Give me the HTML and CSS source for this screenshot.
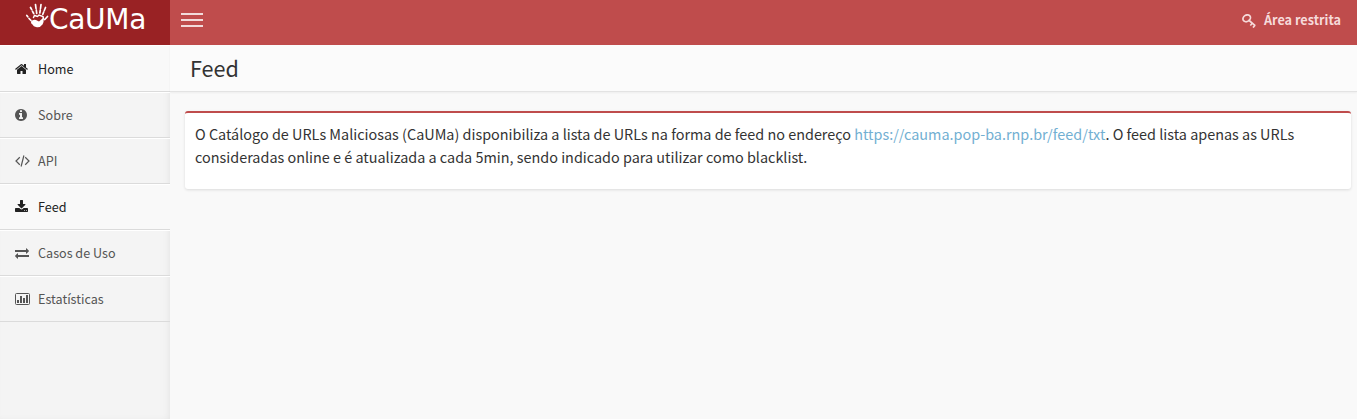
FILE: index.html
```html
<!DOCTYPE html>
<html lang="pt-BR">
<head>
<meta charset="utf-8">
<title>CaUMa - Feed</title>
<link rel="stylesheet" href="styles.css">
</head>
<body>
<header class="header">
  <a class="logo">
    <svg class="hand" viewBox="0 0 24 28" fill="#fff" stroke="#fff" stroke-linecap="round">
      <path d="M6 20.500Q8 18 11 19L14 20.500L18 17Q19.500 20 17.500 23.500Q15 27 11 26Q8.500 25.500 7.500 23.500Q5.500 22.500 6 20.500Z" stroke="none"/>
      <path d="M8.500 16.500L9.500 14.500L12.500 15.500L14 14L18 15.500L18.500 18" fill="none" stroke-width="1.500"/>
      <path d="M1.800 14.500L2.800 15.800M4 17.500L6 19.500M5.500 6.500L6.700 8.700M7.500 10.300L8.700 12.500M10.500 3.500L11 7.500M11.300 9L11.700 12.300M16 3.500L15.500 7.500M15.300 9L14.800 12M20.500 6.500L19.300 9.500M18.700 11L17.800 13.300M22.500 15.500L19.800 18.500" fill="none" stroke-width="1.700"/>
    </svg>
    <span class="logo-text">CaUMa</span>
  </a>
  <nav class="navbar">
    <span class="toggle"><i></i><i></i><i></i></span>
    <a class="login">
      <svg class="key" viewBox="0 0 14 14" fill="none" stroke="#f6dada" stroke-width="1.700"><ellipse cx="4.700" cy="4.300" rx="4" ry="3.200" transform="rotate(-35 4.700 4.300)"/><path d="M6.500 6L13.200 11.600M8.300 11.500L10.300 9.300M11 13.600L13 11.200"/></svg>
      <span>Área restrita</span>
    </a>
  </nav>
</header>
<div class="wrapper">
  <aside class="sidebar">
    <a class="item active"><svg viewBox="64 0 1792 1792"><path d="M1472 992v480q0 26-19 45t-45 19h-384v-384h-256v384h-384q-26 0-45-19t-19-45v-480q0-1 .5-3t.5-3l575-474 575 474q1 2 1 6zm223-69l-62 74q-8 9-21 11h-3q-13 0-21-7l-692-577-692 577q-12 8-24 7-13-2-21-11l-62-74q-8-10-7-23.500t11-21.500l719-599q32-26 76-26t76 26l244 204v-195q0-14 9-23t23-9h192q14 0 23 9t9 23v408l219 182q10 8 11 21.500t-7 23.500z"/></svg><span>Home</span></a>
    <a class="item"><svg viewBox="128 0 1792 1792"><path d="M1152 1376v-160q0-14-9-23t-23-9h-96v-512q0-14-9-23t-23-9h-320q-14 0-23 9t-9 23v160q0 14 9 23t23 9h96v320h-96q-14 0-23 9t-9 23v160q0 14 9 23t23 9h448q14 0 23-9t9-23zm-128-896v-160q0-14-9-23t-23-9h-192q-14 0-23 9t-9 23v160q0 14 9 23t23 9h192q14 0 23-9t9-23zm640 416q0 209-103 385.500t-279.500 279.500-385.500 103-385.500-103-279.500-279.500-103-385.500 103-385.500 279.500-279.500 385.500-103 385.500 103 279.500 279.500 103 385.500z"/></svg><span>Sobre</span></a>
    <a class="item"><svg class="wide" viewBox="0 0 15 14"><path d="M4.800 3.300L1 7L4.800 10.700M10.200 3.300L14 7L10.200 10.700M8.900 1.500L6.100 12.500" fill="none" stroke="currentColor" stroke-width="1.200"/></svg><span>API</span></a>
    <a class="item active"><svg viewBox="64 0 1792 1792"><path d="M1344 1344q0-26-19-45t-45-19-45 19-19 45 19 45 45 19 45-19 19-45zm256 0q0-26-19-45t-45-19-45 19-19 45 19 45 45 19 45-19 19-45zm128-224v320q0 40-28 68t-68 28h-1472q-40 0-68-28t-28-68v-320q0-40 28-68t68-28h465l135 136q58 56 136 56t136-56l136-136h464q40 0 68 28t28 68zm-325-569q17 41-14 70l-448 448q-18 19-45 19t-45-19l-448-448q-31-29-14-70 17-39 59-39h256v-448q0-26 19-45t45-19h256q26 0 45 19t19 45v448h256q42 0 59 39z"/></svg><span>Feed</span></a>
    <a class="item"><svg viewBox="0 0 1792 1792"><path d="M1792 1184v192q0 13-9.500 22.500t-22.500 9.500h-1376v192q0 13-9.500 22.500t-22.500 9.500q-12 0-24-10l-319-320q-9-9-9-22 0-14 9-23l320-320q9-9 23-9 13 0 22.500 9.500t9.500 22.500v192h1376q13 0 22.500 9.500t9.500 22.500zm0-544q0 14-9 23l-320 320q-9 9-23 9-13 0-22.500-9.500t-9.500-22.500v-192h-1376q-13 0-22.500-9.500t-9.500-22.500v-192q0-13 9.500-22.500t22.500-9.500h1376v-192q0-14 9-23t23-9q12 0 24 10l319 319q9 9 9 23z"/></svg><span>Casos de Uso</span></a>
    <a class="item"><svg class="wide" viewBox="0 0 15 14"><rect x=".5" y="1.500" width="14" height="11" rx="1" fill="none" stroke="currentColor"/><path d="M2 8h2v3H2zM5 4h2v7H5zM8 6h2v5H8zM11 3h2v8h-2z"/></svg><span>Estatísticas</span></a>
  </aside>
  <main class="content">
    <h1 class="title">Feed</h1>
    <section class="box">
      <p>O Catálogo de URLs Maliciosas (CaUMa) disponibiliza a lista de URLs na forma de feed no endereço <a class="link">https://cauma.pop-ba.rnp.br/feed/txt</a>. O feed lista apenas as URLs<br>consideradas online e é atualizada a cada 5min, sendo indicado para utilizar como blacklist.</p>
    </section>
  </main>
</div>
</body>
</html>
```
FILE: styles.css
```css
* { box-sizing: border-box; }
body { margin: 0; height: 419px; overflow: hidden; display: flex; flex-direction: column; background: #f9f9f9; color: #333; font-family: "Noto Sans CJK SC", "Open Sans", sans-serif; }
.header { display: flex; height: 45px; flex: none; }
.logo { width: 170px; background: #992224; display: flex; padding-left: 25px; color: #fff; }
.hand { width: 24px; height: 28px; margin-top: 1px; }
.logo-text { font: 28px/40px "DejaVu Sans", sans-serif; letter-spacing: -.3px; }
.navbar { flex: 1; background: #bf4c4c; display: flex; justify-content: space-between; padding: 0 16px 0 11px; }
.toggle { display: flex; flex-direction: column; gap: 4px; padding-top: 13px; }
.toggle i { width: 22px; height: 2px; background: #f2dbdb; }
.login { display: flex; gap: 8px; height: 39px; align-items: center; color: #f6dada; font-size: 12.7px; font-weight: 700; white-space: nowrap; }
.key { width: 14px; height: 14px; margin-top: 2px; }
.wrapper { display: flex; flex: 1; }
.sidebar { width: 170px; flex: none; background: #f4f4f4; box-shadow: inset -3px 0 8px -4px rgba(0,0,0,.1); }
.item { display: flex; align-items: center; height: 46px; padding-left: 15px; border-top: 1px solid #fff; border-bottom: 1px solid #dbdbdb; color: #555; font-size: 12.6px; line-height: 20px; }
.item:first-child { height: 47px; padding-top: 1px; }
.item.active { background: #f9f9f9; color: #222; }
.item svg { width: 14px; height: 14px; fill: currentColor; margin-right: 9px; }
.item svg.wide { width: 15px; margin-right: 8px; }
.content { flex: 1; min-width: 0; }
.title { margin: 0; height: 47px; padding: 0 20px; background: #fbfbfb; border-bottom: 1px solid #e3e3e3; box-shadow: 0 1px 2px rgba(0,0,0,.05); font-size: 21.6px; line-height: 45px; font-weight: 400; }
.box { margin: 19px 6px 0 15px; height: 78px; padding: 9px 10px; background: #fff; border-top: 2px solid #bf4c4c; border-radius: 3px; box-shadow: 0 1px 3px rgba(0,0,0,.12); }
.box p { margin: 0; font-size: 14.41px; line-height: 23px; white-space: nowrap; }
.link { color: #72afd2; }
```
